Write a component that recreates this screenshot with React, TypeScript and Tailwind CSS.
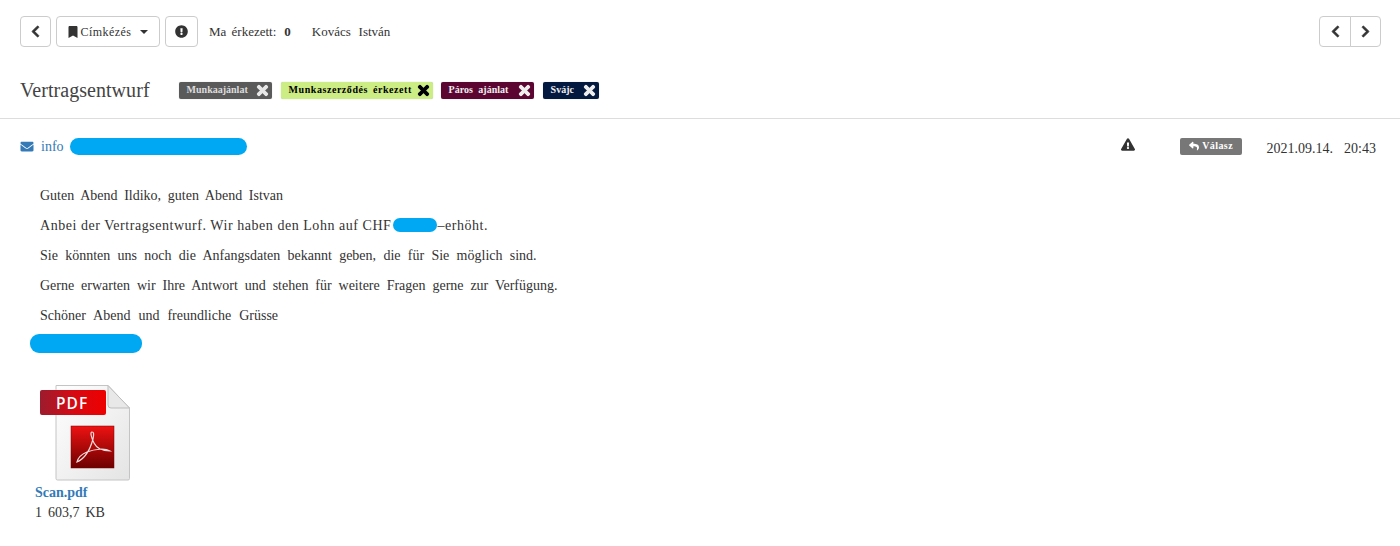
import React from "react";
import { FaChevronLeft, FaChevronRight, FaBookmark, FaExclamationCircle, FaTimes, FaEnvelope, FaExclamationTriangle, FaReply } from "react-icons/fa";

function Tag({ label, cls, x, ml, ws }: { label: string; cls: string; x: string; ml: string; ws: string }) {
  return (
    <span className={`flex h-[17px] items-center justify-between rounded-[2px] pl-[8px] pr-[2px] text-[10px] font-bold leading-none shadow-[0_0_1px_rgba(0,0,0,0.3)] ${cls} ${ml} ${ws}`}>
      <span className="mb-px whitespace-pre">{label}</span>
      <FaTimes className={`h-[15px] w-[15px] stroke-current [stroke-width:35] ${x}`} />
    </span>
  );
}

function PdfIcon() {
  return (
    <svg width="92" height="96" viewBox="0 0 92 96" className="block">
      <defs>
        <linearGradient id="pg" x1="0" y1="0" x2="1" y2="1">
          <stop offset="0" stopColor="#ffffff" />
          <stop offset="1" stopColor="#e4e4e4" />
        </linearGradient>
        <linearGradient id="rb" x1="0" y1="0" x2="1" y2="0">
          <stop offset="0" stopColor="#9b1c2e" />
          <stop offset="0.5" stopColor="#d50a14" />
          <stop offset="1" stopColor="#ee0000" />
        </linearGradient>
        <linearGradient id="rq" x1="0" y1="0" x2="0" y2="1">
          <stop offset="0" stopColor="#ee1212" />
          <stop offset="1" stopColor="#6d0000" />
        </linearGradient>
      </defs>
      <path d="M18 0.5H70L91.5 23V93.5a1.5 1.5 0 0 1-1.5 1.5H19.5a1.5 1.5 0 0 1-1.5-1.5Z" fill="url(#pg)" stroke="#c4c4c4" />
      <path d="M70 0.5L91.5 23H73a3 3 0 0 1-3-3Z" fill="#e8e8e8" stroke="#bdbdbd" />
      <rect x="2" y="5" width="66" height="25" rx="2" fill="url(#rb)" />
      <text x="18" y="23.5" fill="#ffffff" fontFamily="'Open Sans', sans-serif" fontSize="15.5" fontWeight="600" letterSpacing="1">PDF</text>
      <rect x="33" y="41" width="43" height="42" fill="url(#rq)" stroke="#7a0000" strokeWidth="0.5" />
      <path d="M39 77C46 74 52 65 55 54C56 49 56 47 54 47C52 47 53 52 56 58C59 64 64 66 72 66C67 63 57 64 49 67C44 69 40 73 39 77Z" fill="none" stroke="#f6dcdc" strokeWidth="1.2" />
    </svg>
  );
}

export default function App() {
  const btn = "flex h-[31px] items-center justify-center rounded-[4px] border border-[#ccc] bg-white";
  const chev = "h-[13px] w-[13px] stroke-current [stroke-width:30]";
  return (
    <div className="h-[546px] w-[1400px] overflow-hidden bg-white font-['Liberation_Serif',serif] text-[14px] leading-[20px] text-[#333]">
      <div className="flex items-center pl-[20px] pr-[19px] pt-[16px]">
        <button className={`${btn} w-[31px]`}><FaChevronLeft className={chev} /></button>
        <button className={`${btn} ml-[5px] w-[104px] text-[12px]`}>
          <FaBookmark className="h-[12px] w-[10px]" />
          <span className="ml-[3px] tracking-[0.45px]">Címkézés</span>
          <span className="ml-[9px] h-0 w-0 border-x-[4.5px] border-t-[4.5px] border-x-transparent border-t-[#333]" />
        </button>
        <button className={`${btn} ml-[5px] w-[33px]`}><FaExclamationCircle className="h-[13px] w-[13px]" /></button>
        <span className="ml-[11px] text-[13px] [word-spacing:2px]">Ma érkezett:</span>
        <b className="ml-[8px] text-[13px]">0</b>
        <span className="ml-[21px] text-[13px] [word-spacing:4.5px]">Kovács István</span>
        <div className="ml-auto flex">
          <button className={`${btn} w-[32px] rounded-r-none`}><FaChevronLeft className={chev} /></button>
          <button className={`${btn} -ml-px w-[31px] rounded-l-none`}><FaChevronRight className={chev} /></button>
        </div>
      </div>

      <div className="mt-[25px] flex h-[47px] items-start border-b border-[#ddd] pl-[20px]">
        <h1 className="text-[20px] font-normal leading-[37px] tracking-[0.05px] text-[#444]">Vertragsentwurf</h1>
        <div className="ml-[29px] mt-[10px] flex">
          <Tag label="Munkaajánlat" cls="w-[93px] bg-[#5a5a5a] text-[#ddd]" x="text-[#e8e8e8]" ml="" ws="" />
          <Tag label="Munkaszerződés érkezett" cls="w-[152px] bg-[#ccec84] text-black" x="text-black" ml="ml-[9px]" ws="tracking-[0.55px] [word-spacing:2px]" />
          <Tag label="Páros ajánlat" cls="w-[93px] bg-[#5c0533] text-[#eee]" x="text-[#eee]" ml="ml-[8px]" ws="[word-spacing:3px]" />
          <Tag label="Svájc" cls="w-[56px] bg-[#04193f] text-[#eee]" x="text-[#eee]" ml="ml-[9px]" ws="" />
        </div>
      </div>

      <div className="mt-[18px] flex h-[18px] items-center pl-[20px] pr-[24px]">
        <FaEnvelope className="h-[13px] w-[14px] text-[#337ab7]" />
        <span className="ml-[7px] mt-[2px] text-[#337ab7]">info</span>
        <span className="ml-[6px] h-[17px] w-[177px] rounded-[9px] bg-[#00a8f3]" />
        <FaExclamationTriangle className="mb-[4px] ml-auto h-[13px] w-[14px] text-[#333]" />
        <span className="ml-[45px] flex h-[17px] w-[62px] items-center justify-center rounded-[2px] bg-[#777] pb-px text-[10px] font-bold tracking-[0.4px] text-white">
          <FaReply className="mr-[2px] h-[10px] w-[12px]" />Válasz
        </span>
        <span className="ml-[25px] mt-[6px] text-[14px] [word-spacing:7.5px]">2021.09.14. 20:43</span>
      </div>

      <div className="mt-[29px] pl-[40px] [&>p]:h-[30px] [&>p]:leading-[24px]">
        <p className="[word-spacing:3.2px]">Guten Abend Ildiko, guten Abend Istvan</p>
        <p className="tracking-[0.54px]">Anbei der Vertragsentwurf. Wir haben den Lohn auf CHF<span className="ml-[2px] inline-block h-[14px] w-[44px] rounded-[7px] bg-[#00a8f3] align-[-2px]" />–erhöht.</p>
        <p className="[word-spacing:3.8px]">Sie könnten uns noch die Anfangsdaten bekannt geben, die für Sie möglich sind.</p>
        <p className="[word-spacing:3.4px]">Gerne erwarten wir Ihre Antwort und stehen für weitere Fragen gerne zur Verfügung.</p>
        <p className="[word-spacing:4.5px]">Schöner Abend und freundliche Grüsse</p>
      </div>
      <div className="ml-[30px] h-[19px] w-[112px] rounded-[9px] bg-[#00a8f3]" />

      <div className="ml-[38px] mt-[32px]">
        <PdfIcon />
        <div className="ml-[-3px] mt-[2px] font-bold text-[#337ab7]">Scan.pdf</div>
        <div className="ml-[-3px] [word-spacing:2.5px]">1 603,7 KB</div>
      </div>
    </div>
  );
}
